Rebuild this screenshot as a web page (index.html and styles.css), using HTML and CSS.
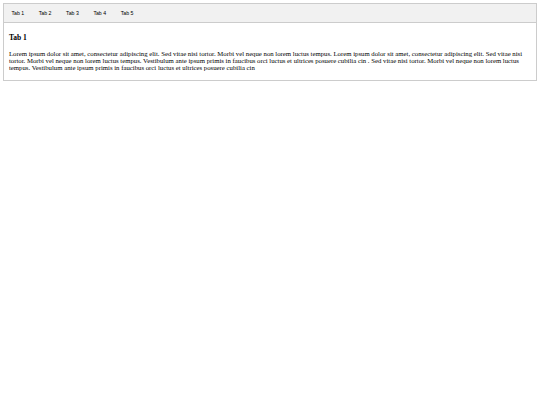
FILE: index.html
```html
<!DOCTYPE html>
<html>
<head>
<meta charset="utf-8">
<link rel="stylesheet" href="styles.css">
</head>
<body>
<div class="tab">
  <button class="tablinks">Tab 1</button>
  <button class="tablinks">Tab 2</button>
  <button class="tablinks">Tab 3</button>
  <button class="tablinks">Tab 4</button>
  <button class="tablinks">Tab 5</button>
</div>
<div class="tabcontent">
  <h3 class="title">Tab 1</h3>
  <p class="text">Lorem ipsum dolor sit amet, consectetur adipiscing elit. Sed vitae nisi tortor. Morbi vel neque non lorem luctus tempus. Lorem ipsum dolor sit amet, consectetur adipiscing elit. Sed vitae nisi tortor. Morbi vel neque non lorem luctus tempus. Vestibulum ante ipsum primis in faucibus orci luctus et ultrices posuere cubilia cin . Sed vitae nisi tortor. Morbi vel neque non lorem luctus tempus. Vestibulum ante ipsum primis in faucibus orci luctus et ultrices posuere cubilia cin</p>
</div>
</body>
</html>
```

FILE: styles.css
```css
html, body {
  background: #ffffff;
}
body {
  margin: 3.2px;
  font-family: "Liberation Serif", "Times New Roman", serif;
  color: #000;
}
.tab {
  display: flex;
  border: 1px solid #ccc;
  background: #f1f1f1;
}
.tablinks {
  background: inherit;
  border: none;
  outline: none;
  margin: 0;
  padding: 6px 7.3px;
  font-family: "Liberation Sans", Arial, sans-serif;
  font-size: 5.2px;
  line-height: 6px;
  color: #000;
}
.tabcontent {
  padding: 2.4px 4.8px;
  border: 1px solid #ccc;
  border-top: none;
}
.title {
  font-size: 7.5px;
  margin: 7.5px 0;
}
.text {
  font-size: 6.75px;
  margin: 6.75px 0;
}
```
